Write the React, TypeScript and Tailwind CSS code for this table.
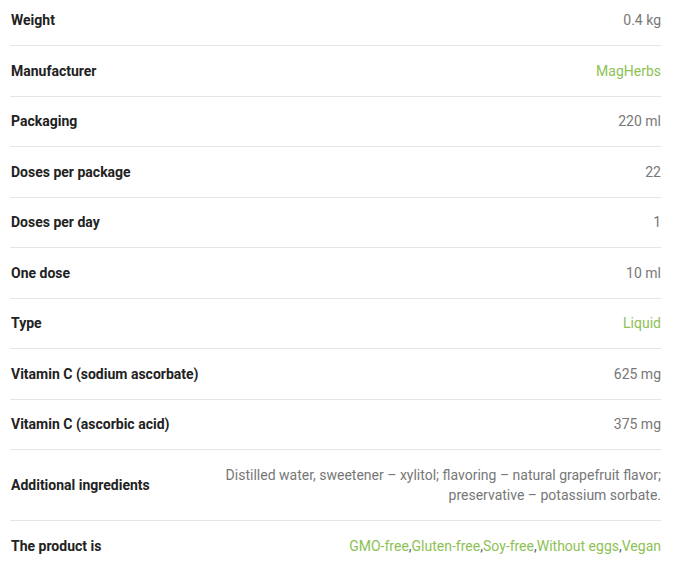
import React from 'react';

type Row = {
  label: string;
  value: React.ReactNode;
  green?: boolean;
};

const freeFrom = ['GMO-free', 'Gluten-free', 'Soy-free', 'Without eggs', 'Vegan'];

const rows: Row[] = [
  { label: 'Weight', value: '0.4 kg' },
  { label: 'Manufacturer', value: 'MagHerbs', green: true },
  { label: 'Packaging', value: '220 ml' },
  { label: 'Doses per package', value: '22' },
  { label: 'Doses per day', value: '1' },
  { label: 'One dose', value: '10 ml' },
  { label: 'Type', value: 'Liquid', green: true },
  { label: 'Vitamin C (sodium ascorbate)', value: '625 mg' },
  { label: 'Vitamin C (ascorbic acid)', value: '375 mg' },
  {
    label: 'Additional ingredients',
    value: (
      <>
        Distilled water, sweetener – xylitol; flavoring – natural grapefruit flavor;
        <br />
        preservative – potassium sorbate.
      </>
    ),
  },
  {
    label: 'The product is',
    value: freeFrom.map((item, i) => (
      <React.Fragment key={item}>
        <span className="text-[#8dc154]">{item}</span>
        {i < freeFrom.length - 1 && <span className="text-[#5a6270]">,</span>}
      </React.Fragment>
    )),
  },
];

export default function App() {
  return (
    <div
      className="w-[676px] h-[572px] overflow-hidden bg-white px-[10px] text-[14px] leading-[20.5px]"
      style={{ fontFamily: 'Roboto, "Liberation Sans", sans-serif' }}
    >
      <div className="w-[651px]">
        {rows.map((row, i) => (
          <div
            key={row.label}
            className={
              'flex items-center justify-between gap-6 border-[#e6e6e6] ' +
              (i === 0 ? 'pt-[10px] pb-[14.5px] ' : 'py-[14.5px] ') +
              (i < rows.length - 1 ? 'border-b' : '')
            }
          >
            <div className="shrink-0 pl-px font-bold text-[#222]">{row.label}</div>
            <div
              className={
                'text-right ' + (row.green ? 'text-[#8dc154]' : 'text-[#777]')
              }
            >
              {row.value}
            </div>
          </div>
        ))}
      </div>
    </div>
  );
}
